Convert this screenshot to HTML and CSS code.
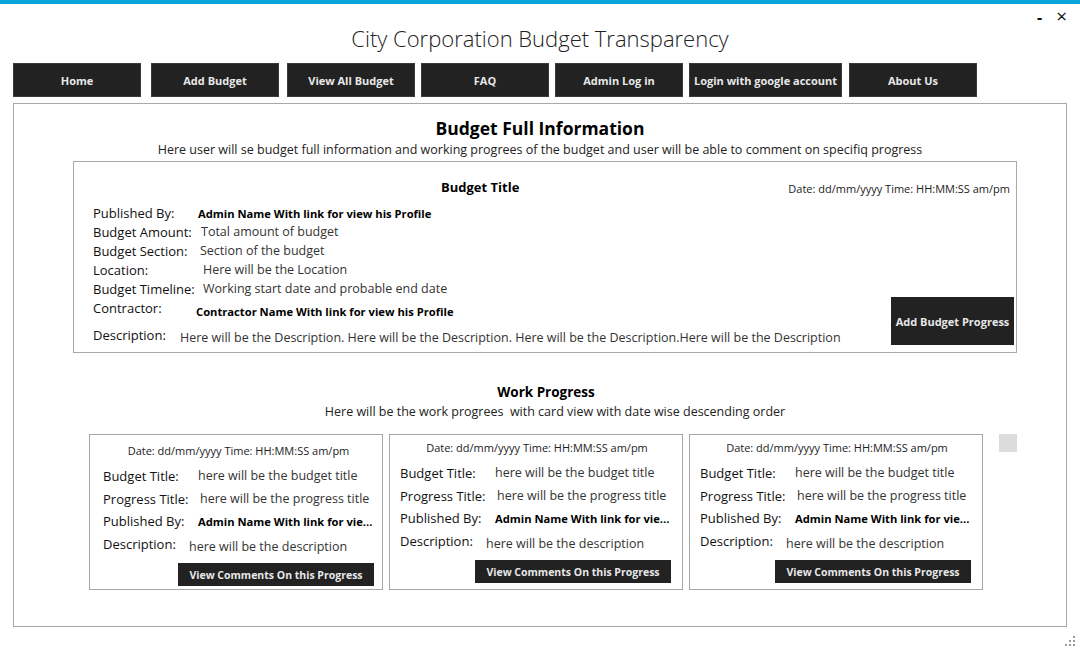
FILE: index.html
```html
<!DOCTYPE html>
<html>
<head>
<meta charset="utf-8">
<link rel="stylesheet" href="styles.css">
</head>
<body>
<div class="topbar"></div>
<div class="win-controls"><span class="min">-</span><span class="close">×</span></div>
<header class="app-title">City Corporation Budget Transparency</header>
<nav class="nav">
  <button class="nav-btn">Home</button>
  <button class="nav-btn g10">Add Budget</button>
  <button class="nav-btn g8">View All Budget</button>
  <button class="nav-btn">FAQ</button>
  <button class="nav-btn">Admin Log in</button>
  <button class="nav-btn wide">Login with google account</button>
  <button class="nav-btn g7">About Us</button>
</nav>
<main class="panel">
  <h1 class="page-title">Budget Full Information</h1>
  <p class="page-sub">Here user will se budget full information and working progrees of the budget and user will be able to comment on specifiq progress</p>
  <section class="info">
    <div class="info-head">
      <h2 class="info-title">Budget Title</h2>
      <span class="info-date">Date: dd/mm/yyyy Time: HH:MM:SS am/pm</span>
    </div>
    <div class="info-body">
      <div class="rows">
        <div class="row"><span class="lbl">Published By:</span><span class="val bold v-pub">Admin Name With link for view his Profile</span></div>
        <div class="row"><span class="lbl">Budget Amount:</span><span class="val v-amt">Total amount of budget</span></div>
        <div class="row"><span class="lbl">Budget Section:</span><span class="val v-sec">Section of the budget</span></div>
        <div class="row"><span class="lbl">Location:</span><span class="val v-loc">Here will be the Location</span></div>
        <div class="row"><span class="lbl">Budget Timeline:</span><span class="val v-loc">Working start date and probable end date</span></div>
        <div class="row"><span class="lbl">Contractor:</span><span class="val bold v-con">Contractor Name With link for view his Profile</span></div>
        <div class="row row-desc"><span class="lbl">Description:</span><span class="val v-desc">Here will be the Description. Here will be the Description. Here will be the Description.Here will be the Description</span></div>
      </div>
      <button class="add-progress">Add Budget Progress</button>
    </div>
  </section>
  <h2 class="wp-title">Work Progress</h2>
  <p class="wp-sub">Here will be the work progrees&nbsp; with card view with date wise descending order</p>
  <div class="cards">
    <article class="card shift">
      <div class="card-date">Date: dd/mm/yyyy Time: HH:MM:SS am/pm</div>
      <div class="crow"><span class="clbl">Budget Title:</span><span class="cval">here will be the budget title</span></div>
      <div class="crow"><span class="clbl">Progress Title:</span><span class="cval c-pt">here will be the progress title</span></div>
      <div class="crow"><span class="clbl">Published By:</span><span class="cval bold">Admin Name With link for vie...</span></div>
      <div class="crow"><span class="clbl">Description:</span><span class="cval c-desc">here will be the description</span></div>
      <div class="card-foot"><button class="comments">View Comments On this Progress</button></div>
    </article>
    <article class="card">
      <div class="card-date">Date: dd/mm/yyyy Time: HH:MM:SS am/pm</div>
      <div class="crow"><span class="clbl">Budget Title:</span><span class="cval">here will be the budget title</span></div>
      <div class="crow"><span class="clbl">Progress Title:</span><span class="cval c-pt">here will be the progress title</span></div>
      <div class="crow"><span class="clbl">Published By:</span><span class="cval bold">Admin Name With link for vie...</span></div>
      <div class="crow"><span class="clbl">Description:</span><span class="cval c-desc">here will be the description</span></div>
      <div class="card-foot"><button class="comments">View Comments On this Progress</button></div>
    </article>
    <article class="card">
      <div class="card-date">Date: dd/mm/yyyy Time: HH:MM:SS am/pm</div>
      <div class="crow"><span class="clbl">Budget Title:</span><span class="cval">here will be the budget title</span></div>
      <div class="crow"><span class="clbl">Progress Title:</span><span class="cval c-pt">here will be the progress title</span></div>
      <div class="crow"><span class="clbl">Published By:</span><span class="cval bold">Admin Name With link for vie...</span></div>
      <div class="crow"><span class="clbl">Description:</span><span class="cval c-desc">here will be the description</span></div>
      <div class="card-foot"><button class="comments">View Comments On this Progress</button></div>
    </article>
    <div class="scroll-sq"></div>
  </div>
</main>
<div class="grip">
  <svg width="14" height="12" viewBox="0 0 14 12"><g fill="#9a9a9a"><rect x="10" y="1" width="2" height="2"/><rect x="6" y="5" width="2" height="2"/><rect x="10" y="5" width="2" height="2"/><rect x="2" y="9" width="2" height="2"/><rect x="6" y="9" width="2" height="2"/><rect x="10" y="9" width="2" height="2"/></g></svg>
</div>
</body>
</html>
```

FILE: styles.css
```css
* { box-sizing: border-box; }
html, body { margin: 0; padding: 0; }
body {
  width: 1080px;
  height: 650px;
  background: #fff;
  font-family: "Segoe UI", "Open Sans", sans-serif;
  color: #111;
  position: relative;
  overflow: hidden;
}
.topbar { height: 4px; background: #0aa6da; }
.win-controls {
  position: absolute;
  top: 3px;
  right: 13px;
  display: flex;
  align-items: center;
  gap: 14px;
  font-size: 19px;
  line-height: 24px;
  color: #111;
}
.win-controls .min { font-weight: 700; font-size: 16px; padding-top: 2px; }
.app-title {
  padding-top: 18px;
  height: 50px;
  text-align: center;
  font-size: 22px;
  line-height: 32px;
  font-weight: 300;
  color: #222;
}
.nav {
  display: flex;
  margin: 9px 0 0 13px;
  gap: 6px;
}
.nav-btn {
  width: 128px;
  height: 34px;
  background: #222;
  border: 1px solid #3a3a3a;
  color: #e8e8e8;
  font-family: inherit;
  font-size: 11px;
  font-weight: 700;
  padding: 0;
}
.nav-btn.g10 { margin-left: 4px; }
.nav-btn.g8 { margin-left: 2px; }
.nav-btn.g7 { margin-left: 1px; }
.nav-btn.wide { width: 153px; }
.panel {
  margin: 6px 0 0 13px;
  width: 1054px;
  height: 524px;
  border: 1px solid #a9a9a9;
  padding-top: 12px;
}
.page-title {
  margin: 0;
  text-align: center;
  font-size: 17.5px;
  line-height: 24px;
  font-weight: 700;
  color: #000;
}
.page-sub {
  margin: 0;
  padding-top: 1px;
  text-align: center;
  font-size: 12.5px;
  line-height: 18px;
  color: #222;
}
.info {
  margin: 2px 0 0 59px;
  width: 944px;
  height: 192px;
  border: 1px solid #a9a9a9;
  padding: 14px 2px 0 19px;
}
.info-head {
  display: flex;
  align-items: center;
  height: 22px;
}
.info-title {
  margin: 0 0 0 348px;
  font-size: 13px;
  font-weight: 700;
  color: #000;
  flex: 1;
}
.info-date {
  font-size: 11px;
  color: #222;
  margin-top: 2px;
  margin-right: 4px;
}
.info-body {
  display: flex;
  align-items: flex-end;
  margin-top: 6px;
}
.rows { flex: 1; }
.row {
  display: flex;
  align-items: center;
  height: 19px;
  font-size: 13px;
  white-space: nowrap;
}
.row:first-child { height: 18px; }
.lbl { color: #111; width: 104px; flex: none; }
.val { color: #333; font-weight: 400; font-size: 12.5px; }
.val.bold { font-weight: 700; font-size: 11.2px; color: #000; }
.v-pub { margin-left: 1px; }
.v-amt { margin-left: 4px; }
.v-sec { margin-left: 3px; }
.v-loc { margin-left: 6px; }
.v-con { margin-left: -1px; padding-top: 8px; }
.row-desc { height: 30px; padding-top: 6px; }
.row-desc .lbl { width: 87px; }
.v-desc { padding-top: 5px; }
.add-progress {
  width: 123px;
  height: 48px;
  margin-bottom: 2px;
  background: #222;
  border: none;
  color: #e8e8e8;
  font-family: inherit;
  font-size: 11px;
  font-weight: 700;
  padding: 0;
}
.wp-title {
  margin: 29px 0 0;
  text-align: center;
  font-size: 13.5px;
  line-height: 20px;
  font-weight: 700;
  color: #000;
  padding-left: 12px;
}
.wp-sub {
  margin: 0;
  padding: 1px 0 0 30px;
  text-align: center;
  font-size: 12.5px;
  line-height: 18px;
  color: #222;
}
.cards {
  display: flex;
  gap: 6px;
  margin: 13px 0 0 75px;
}
.card {
  width: 294px;
  height: 156px;
  border: 1px solid #a9a9a9;
  padding: 5px 0 0 10px;
}
.card.shift { padding: 8px 0 0 13px; }
.card-date {
  text-align: center;
  font-size: 11px;
  line-height: 16px;
  color: #222;
  padding-right: 8px;
  margin-bottom: 5px;
}
.crow {
  display: flex;
  align-items: center;
  height: 23px;
  font-size: 13px;
  white-space: nowrap;
}
.crow:nth-child(4) { height: 22px; }
.clbl { width: 95px; flex: none; color: #111; }
.cval { color: #333; font-weight: 400; font-size: 12.5px; }
.cval.bold { font-weight: 700; font-size: 11.2px; color: #000; }
.c-pt { margin-left: 2px; }
.c-desc { margin-left: -9px; padding-top: 5px; }
.card-foot {
  display: flex;
  justify-content: flex-end;
  padding-right: 11px;
  margin-top: 8px;
}
.card.shift .card-foot { padding-right: 8px; }
.comments {
  width: 196px;
  height: 23px;
  background: #222;
  border: none;
  color: #e8e8e8;
  font-family: inherit;
  font-size: 10.5px;
  font-weight: 700;
  padding: 0;
}
.scroll-sq {
  width: 18px;
  height: 18px;
  background: #dcdcdc;
  margin-left: 10px;
}
.grip {
  position: absolute;
  right: 3px;
  bottom: 3px;
  line-height: 0;
}
```
